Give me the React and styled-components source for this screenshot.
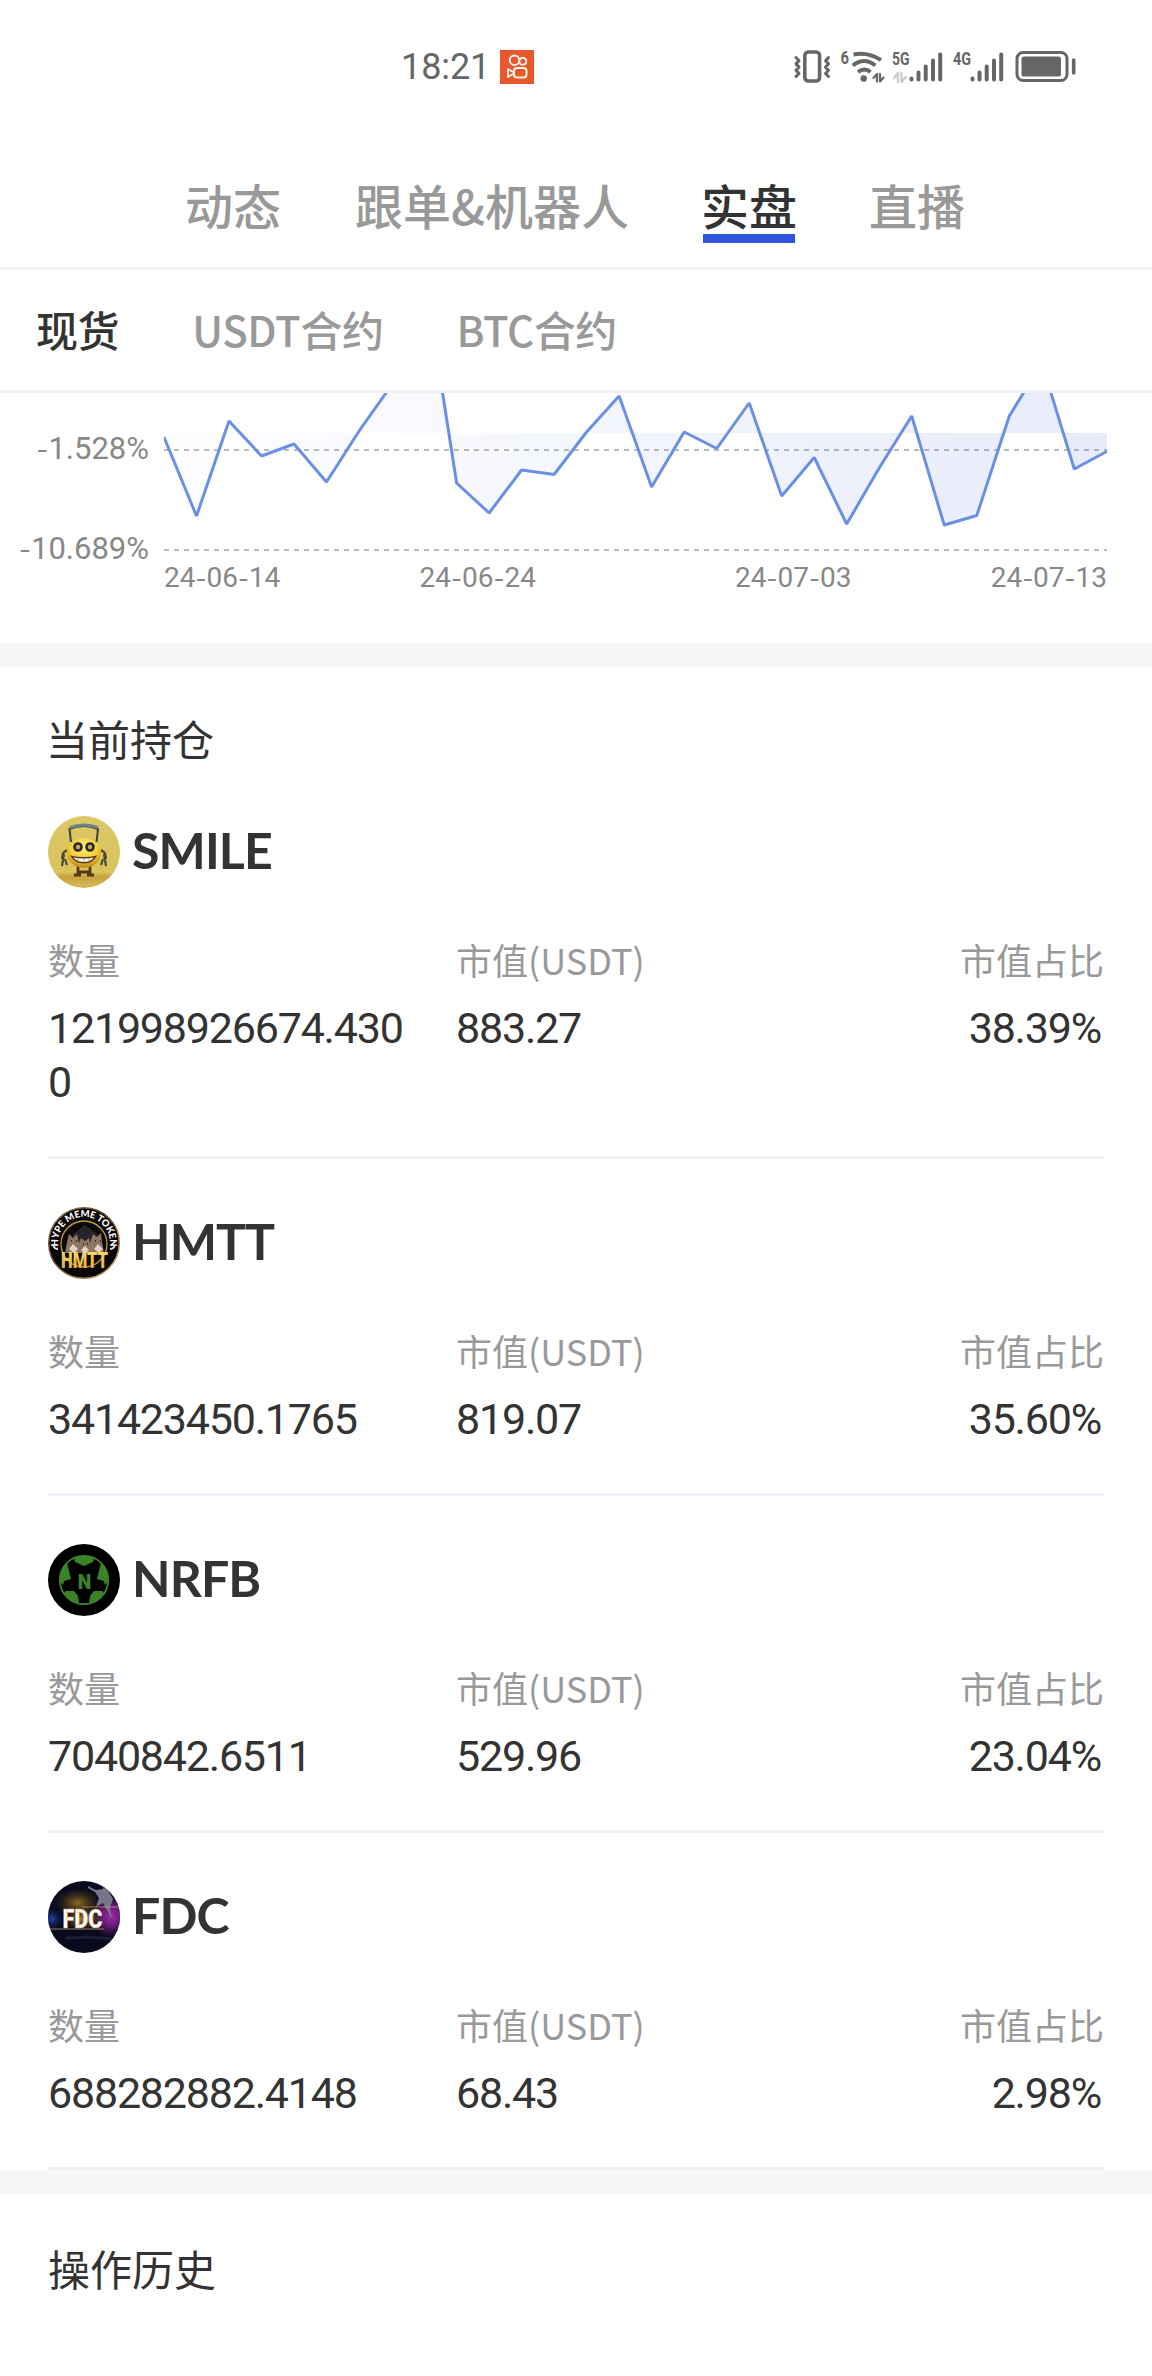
import React from 'react';
import styled, { createGlobalStyle, css } from 'styled-components';

const GlobalStyle = createGlobalStyle`
  * {
    box-sizing: border-box;
  }

  body {
    margin: 0;
    background: #fff;
    color: #333;
    font-family: "Noto Sans CJK SC", "Noto Sans", sans-serif;
  }
`;

const mainTabs = [
  { name: '动态' },
  { name: '跟单&机器人' },
  { name: '实盘', active: true },
  { name: '直播' },
];

const subTabs = [
  { name: '现货', active: true },
  { name: 'USDT合约' },
  { name: 'BTC合约' },
];

// y of every day on the profit curve, 32.5px apart
const curve = [
  44, 123, 28, 63, 51, 89, 38, -8, -119, 90, 120, 77, 81.5, 39, 3, 94,
  39, 55.5, 10, 103, 64.5, 131, 75, 23, 132, 122.5, 23, -30, 76, 58.5,
];

const StatusIcons = () => (
  <svg width="290" height="44" viewBox="0 0 290 44" fill="none" stroke="#666" strokeLinecap="round" strokeLinejoin="round">
    {/* vibration */}
    <rect x="12.8" y="7" width="14.8" height="29" rx="3.5" strokeWidth="3.6" />
    <path d="M4 12.500l3 3.200-3 3.200 3 3.200-3 3.200 3 3.200-3 3M36.500 12.500l-3 3.200 3 3.200-3 3.200 3 3.200-3 3.200 3 3" strokeWidth="3" />
    {/* wifi */}
    <path d="M61.500 9.500q14-3 27.500 5.500M60.800 20.500q11.500-9 22.500 0M66 27q6.500-5 12.500 0" strokeWidth="4" strokeLinecap="butt" />
    <circle cx="71.700" cy="33.500" r="3.200" fill="#666" stroke="none" />
    <path d="M81.500 33l3.500-4v7.500M88 29v7.500l3.500-4" strokeWidth="2.200" />
    {/* 5G */}
    <path d="M102 33l4-5v9M109.500 28v9l4-5" stroke="#ccc" strokeWidth="2.400" />
    <path d="M119.500 33.500v1M126.500 27.500v7M133.700 21.500v13M141 15.500v19M148.200 9.500v25" strokeWidth="4" />
    {/* 4G */}
    <path d="M180.500 33.500v1M187.500 27.500v7M194.700 21.500v13M202 15.500v19M209.200 9.500v25" strokeWidth="4" />
    {/* battery */}
    <rect x="225" y="7.500" width="50" height="28" rx="6" strokeWidth="3" />
    <rect x="229.500" y="11.500" width="39.500" height="20" rx="2.500" fill="#666" stroke="none" />
    <path d="M281.700 15v13" strokeWidth="3.600" />
    <NetText x="48.500" y="18.500" textLength="8.500" lengthAdjust="spacingAndGlyphs">6</NetText>
    <NetText x="100" y="20" textLength="17.500" lengthAdjust="spacingAndGlyphs">5G</NetText>
    <NetText x="161" y="20" textLength="18" lengthAdjust="spacingAndGlyphs">4G</NetText>
  </svg>
);

const AppBadge = () => (
  <svg width="34" height="34" viewBox="0 0 34 34" fill="none" stroke="#fff6ea" strokeWidth="1.900">
    <rect width="34" height="34" fill="#e9582c" stroke="none" />
    <circle cx="14.500" cy="10.300" r="4.800" />
    <circle cx="22.800" cy="11.300" r="3.500" />
    <rect x="14" y="18" width="12.500" height="9.500" rx="3" />
    <path d="M13 22l-5-3v8l5-3" strokeLinejoin="round" />
  </svg>
);

const SmileLogo = () => (
  <svg width="72" height="72" viewBox="0 0 72 72">
    <defs>
      <linearGradient id="smileBg" x1="0" y1="0" x2="0" y2="1">
        <stop offset="0" stopColor="#dcc766" />
        <stop offset=".78" stopColor="#d9c35c" />
        <stop offset=".84" stopColor="#c4a23e" />
        <stop offset="1" stopColor="#d8bd57" />
      </linearGradient>
      <radialGradient id="smileBody" cx=".5" cy=".3" r=".7">
        <stop offset="0" stopColor="#ffee7d" />
        <stop offset=".6" stopColor="#f2cd33" />
        <stop offset="1" stopColor="#b98a16" />
      </radialGradient>
    </defs>
    <circle cx="36" cy="36" r="36" fill="url(#smileBg)" />
    <path d="M23 26l-1.500-13q14-6 28.500 0L48.500 26" fill="none" stroke="#3c4244" strokeWidth="2" />
    <path d="M22 11.500q14-5 28 0" fill="none" stroke="#6d8588" strokeWidth="3" />
    <path d="M19 34l-4 3-1 6M16 38l-2 12M17 43l2 6M53 34l4 3 1 6M56 38l2 12M55 43l-2 6" fill="none" stroke="#4b4a3a" strokeWidth="2.200" />
    <path d="M30 50v9M42 50v9M26 59h7M39 59h7M30 56h12" stroke="#56371c" strokeWidth="2.800" />
    <ellipse cx="36" cy="37" rx="17" ry="15" fill="url(#smileBody)" />
    <circle cx="30" cy="31" r="4.800" fill="#2b2b27" />
    <circle cx="42" cy="31" r="4.800" fill="#2b2b27" />
    <circle cx="30" cy="31" r="2.200" fill="#cba864" />
    <circle cx="42" cy="31" r="2.200" fill="#cba864" />
    <path d="M22 39.500q14 3 27 0-4 8-13 8t-14-8z" fill="#5d3516" />
    <path d="M25 41.500q11 2 21 0-4 4.500-10 4.500t-11-4.500z" fill="#f2f4f2" />
    <path d="M30 42v4M36 42.500v4M41 42v4" stroke="#8c8c80" strokeWidth=".6" />
  </svg>
);

const HmttLogo = () => (
  <svg width="72" height="72" viewBox="0 0 72 72" overflow="visible">
    <defs>
      <path id="hmttArc" d="M13.500 49A26 26 0 1 1 58.500 49" />
      <linearGradient id="hmttGold" x1="0" y1="0" x2="0" y2="1">
        <stop offset="0" stopColor="#fbe074" />
        <stop offset="1" stopColor="#e2a42b" />
      </linearGradient>
      <linearGradient id="hmttRim" x1="0" y1="0" x2="1" y2="1">
        <stop offset="0" stopColor="#a58a55" />
        <stop offset=".4" stopColor="#5b4522" />
        <stop offset="1" stopColor="#d9b777" />
      </linearGradient>
    </defs>
    <circle cx="36" cy="36" r="35.300" fill="#080606" stroke="url(#hmttRim)" strokeWidth="1.500" />
    <circle cx="36" cy="37" r="23" fill="#0b0a0a" stroke="#c59a45" strokeWidth="1.300" />
    <path d="M25 27l12-9 12 9v8H25z" fill="#25252a" />
    <path d="M17 46l2-11 2-8 4 4 4-4 2 9 2-5 4 3 4-3 1 5 3-9 4 3 4-4 1 9 2 11z" fill="#8d7563" />
    <path d="M21 42l4-5 5 5-4 4zM33 43l4-4 4 4-4 4zM46 42l4-5 5 5-4 4z" fill="#e1d5cb" />
    <path d="M23 34h1M28 34h1M35 37h1M39 37h1M47 34h1M52 34h1" stroke="#211812" strokeWidth="1.500" />
    <RingText>
      <textPath href="#hmttArc" startOffset="50%" textAnchor="middle">HYPE MEME TOKEN</textPath>
    </RingText>
    <path d="M5.500 39q1 3 4.500 3M66.500 39q-1 3-4.500 3" fill="none" stroke="#ddd" strokeWidth="2" />
    <LogoText x="36.500" y="61" $size={22} fill="url(#hmttGold)" textLength="47" lengthAdjust="spacingAndGlyphs">HMTT</LogoText>
  </svg>
);

const NrfbLogo = () => (
  <svg width="72" height="72" viewBox="0 0 72 72">
    <circle cx="36" cy="36" r="36" fill="#000" />
    <circle cx="36" cy="36" r="24.200" fill="#000" stroke="#3a8427" strokeWidth="1.800" />
    <g fill="#3a8427">
      <path d="M26 14q10-4 20 0l-1 4-9 4-9-4z" />
      <path d="M12 29l7-10 2 8 2 8-7 2-1 4q-3-1-3-12z" />
      <path d="M60 29l-7-10-2 8-2 8 7 2 1 4q3-1 3-12z" />
      <path d="M16 49l2-2h8l4 5 1 8q-10-3-15-11z" />
      <path d="M56 49l-2-2h-8l-4 5-1 8q10-3 15-11z" />
    </g>
    <LogoText x="36.500" y="44.500" $size={20} fill="#3a8427" textLength="13.500" lengthAdjust="spacingAndGlyphs">N</LogoText>
  </svg>
);

const FdcLogo = () => (
  <svg width="72" height="72" viewBox="0 0 72 72">
    <defs>
      <radialGradient id="fdcAmber">
        <stop offset="0" stopColor="#b18428" />
        <stop offset="1" stopColor="#58400f" stopOpacity="0" />
      </radialGradient>
      <radialGradient id="fdcPurple">
        <stop offset="0" stopColor="#a52ca0" />
        <stop offset=".5" stopColor="#7a2190" stopOpacity=".8" />
        <stop offset="1" stopColor="#381050" stopOpacity="0" />
      </radialGradient>
      <radialGradient id="fdcBlue">
        <stop offset="0" stopColor="#2145a0" />
        <stop offset="1" stopColor="#101c50" stopOpacity="0" />
      </radialGradient>
      <clipPath id="fdcClip">
        <circle cx="36" cy="36" r="36" />
      </clipPath>
    </defs>
    <g clipPath="url(#fdcClip)">
      <rect width="72" height="72" fill="#090a1c" />
      <ellipse cx="30" cy="22" rx="24" ry="15" fill="url(#fdcAmber)" opacity=".8" />
      <ellipse cx="63" cy="35" rx="20" ry="22" fill="url(#fdcPurple)" />
      <ellipse cx="4" cy="38" rx="12" ry="12" fill="url(#fdcBlue)" />
      <path d="M40 5l8 4 7-1 1-5 5 2v6l4 7-3 8 2 12-5-9-4-7-7 4 3-9-4-6-7-4z" fill="#77758b" />
      <path d="M0 48h56M34 26h36" stroke="#d3a273" strokeWidth="1" opacity=".75" />
      <path d="M18 57q30-2 52 2" stroke="#1d1e33" strokeWidth="3" fill="none" />
      <rect x="14" y="26" width="42" height="24" fill="url(#fdcAmber)" />
      <LogoText x="34.500" y="47" $size={26} fill="#fff" stroke="#d9a566" strokeWidth=".4" textLength="40" lengthAdjust="spacingAndGlyphs">FDC</LogoText>
    </g>
  </svg>
);

const holdings = [
  { coin: 'SMILE', logo: <SmileLogo />, amount: '121998926674.4300', value: '883.27', share: '38.39%' },
  { coin: 'HMTT', logo: <HmttLogo />, amount: '341423450.1765', value: '819.07', share: '35.60%' },
  { coin: 'NRFB', logo: <NrfbLogo />, amount: '7040842.6511', value: '529.96', share: '23.04%' },
  { coin: 'FDC', logo: <FdcLogo />, amount: '688282882.4148', value: '68.43', share: '2.98%' },
];

// The chart digits are narrow, but their dash is a wide one
const ChartText = ({ children }) => children.split('-').map((part, i) => (
  <React.Fragment key={i}>
    {i > 0 && <Dash>-</Dash>}
    {part}
  </React.Fragment>
));

const Curve = () => {
  const points = curve.map((y, i) => `${(i * 32.51).toFixed(1)},${y}`).join(' ');

  return (
    <Plot width="943" height="160" viewBox="0 0 943 160">
      <defs>
        <linearGradient id="curveFill">
          <stop offset="0" stopColor="#5a8cff" stopOpacity=".01" />
          <stop offset=".5" stopColor="#4a70e0" stopOpacity=".07" />
          <stop offset="1" stopColor="#3a5ad2" stopOpacity=".12" />
        </linearGradient>
      </defs>
      <path d="M0 57H943M0 157H943" stroke="#bbb" strokeWidth="2" strokeDasharray="5 5" />
      <polygon points={`0,40 ${points} 943,40`} fill="url(#curveFill)" />
      <polyline points={points} fill="none" stroke="#6a90e6" strokeWidth="3" strokeLinejoin="bevel" />
    </Plot>
  );
};

const App = () => (
  <>
    <GlobalStyle />
    <Screen>
      <StatusBar>
        <Clock>
          18:21
          <AppBadge />
        </Clock>
        <StatusIcons />
      </StatusBar>
      <MainTabs>
        {mainTabs.map((tab) => (
          <MainTab key={tab.name} $active={tab.active}>{tab.name}</MainTab>
        ))}
      </MainTabs>
      <SubTabs>
        {subTabs.map((tab) => (
          <SubTab key={tab.name} $active={tab.active}>{tab.name}</SubTab>
        ))}
      </SubTabs>
      <Chart>
        <YAxis>
          <span><ChartText>-1.528%</ChartText></span>
          <span><ChartText>-10.689%</ChartText></span>
        </YAxis>
        <div>
          <Curve />
          <XAxis>
            <span><ChartText>24-06-14</ChartText></span>
            <span><ChartText>24-06-24</ChartText></span>
            <span><ChartText>24-07-03</ChartText></span>
            <span><ChartText>24-07-13</ChartText></span>
          </XAxis>
        </div>
      </Chart>
      <Spacer />
      <SectionTitle>当前持仓</SectionTitle>
      <List>
        {holdings.map((item) => (
          <Holding key={item.coin}>
            <Coin>
              {item.logo}
              <h2>{item.coin}</h2>
            </Coin>
            <Data>
              <Field>
                <Label>数量</Label>
                <Value>{item.amount}</Value>
              </Field>
              <Field>
                <Label>市值(USDT)</Label>
                <Value>{item.value}</Value>
              </Field>
              <Field $right>
                <Label>市值占比</Label>
                <Value>{item.share}</Value>
              </Field>
            </Data>
          </Holding>
        ))}
      </List>
      <Spacer />
      <SectionTitle $last>操作历史</SectionTitle>
    </Screen>
  </>
);

export default App;

const Screen = styled.div`
  width: 1152px;
  height: 2376px;
  overflow: hidden;
  background: #fff;
`;

const StatusBar = styled.div`
  display: flex;
  justify-content: space-between;
  height: 134px;
  padding: 45px 70px 0 401px;
`;

const Clock = styled.div`
  display: flex;
  align-items: center;
  gap: 10px;
  height: 44px;
  color: #666;
  font: 36px Roboto, sans-serif;
  letter-spacing: -0.1px;
`;

const NetText = styled.text`
  fill: #666;
  stroke: none;
  font: 700 19px Roboto, sans-serif;
`;

const LogoText = styled.text`
  font: 900 ${(props) => props.$size}px Roboto, sans-serif;
  text-anchor: middle;
`;

const RingText = styled.text`
  fill: #fff;
  font: 900 9.5px Lato, sans-serif;
  letter-spacing: -0.2px;
`;

const MainTabs = styled.div`
  display: flex;
  gap: 74px;
  height: 136px;
  padding: 38px 0 0 185px;
  border-bottom: 3px solid #eff1f9;
`;

const MainTab = styled.div`
  height: 71px;
  color: #999;
  font-size: 48px;
  font-weight: 500;
  line-height: 65px;
  white-space: nowrap;

  ${(props) => props.$active && css`
    width: 92px;
    border-bottom: 9px solid #2f54dd;
    color: #333;
    text-indent: -2px;
  `}
`;

const SubTabs = styled.div`
  display: flex;
  gap: 73px;
  height: 123px;
  padding: 0 36px;
  border-bottom: 3px solid #eff1f9;
`;

const SubTab = styled.div`
  color: ${(props) => (props.$active ? '#333' : '#999')};
  font-size: 42px;
  font-weight: 500;
  letter-spacing: -0.4px;
  line-height: 117px;
`;

const Chart = styled.div`
  display: flex;
  gap: 15px;
  height: 250px;
  color: #888;
  font-family: Roboto, sans-serif;
`;

const YAxis = styled.div`
  display: flex;
  flex-direction: column;
  gap: 60px;
  width: 149px;
  padding-top: 36px;
  font-size: 31px;
  line-height: 40px;
  text-align: right;
`;

const Plot = styled.svg`
  display: block;
`;

const XAxis = styled.div`
  display: flex;
  justify-content: space-between;
  padding-top: 7px;
  font-size: 28px;
  line-height: 36px;

  span:nth-child(2) {
    margin-right: 60px;
  }
`;

const Dash = styled.i`
  font-family: Inter, sans-serif;
  font-size: 0.85em;
  font-style: normal;
`;

const Spacer = styled.div`
  height: 24px;
  background: #f6f6f6;
`;

const SectionTitle = styled.h1`
  height: 101px;
  margin: 0;
  padding-left: ${(props) => (props.$last ? 48 : 46)}px;
  font-size: 42px;
  font-weight: 400;
  line-height: ${(props) => (props.$last ? 147 : 141)}px;
`;

const List = styled.div`
  padding: 0 48px;
`;

const Holding = styled.div`
  padding: 48px 0;
  border-bottom: 3px solid #eff1f9;
`;

const Coin = styled.div`
  display: flex;
  align-items: center;
  gap: 12px;
  height: 72px;

  h2 {
    margin: 0;
    font: 700 50px/69px Lato, sans-serif;
    height: 72px;
    letter-spacing: -0.9px;
  }
`;

const Data = styled.div`
  display: grid;
  grid-template-columns: 368px 1fr 300px;
  column-gap: 40px;
  padding-top: 45px;
`;

const Field = styled.div`
  text-align: ${(props) => (props.$right ? 'right' : 'left')};
`;

const Label = styled.div`
  height: 68px;
  color: #999;
  font-size: 36px;
  line-height: 52px;
`;

const Value = styled.div`
  margin-bottom: -1px;
  padding-right: 3px;
  font: 43px/54px Roboto, sans-serif;
  letter-spacing: -1.2px;
  word-break: break-all;
`;
